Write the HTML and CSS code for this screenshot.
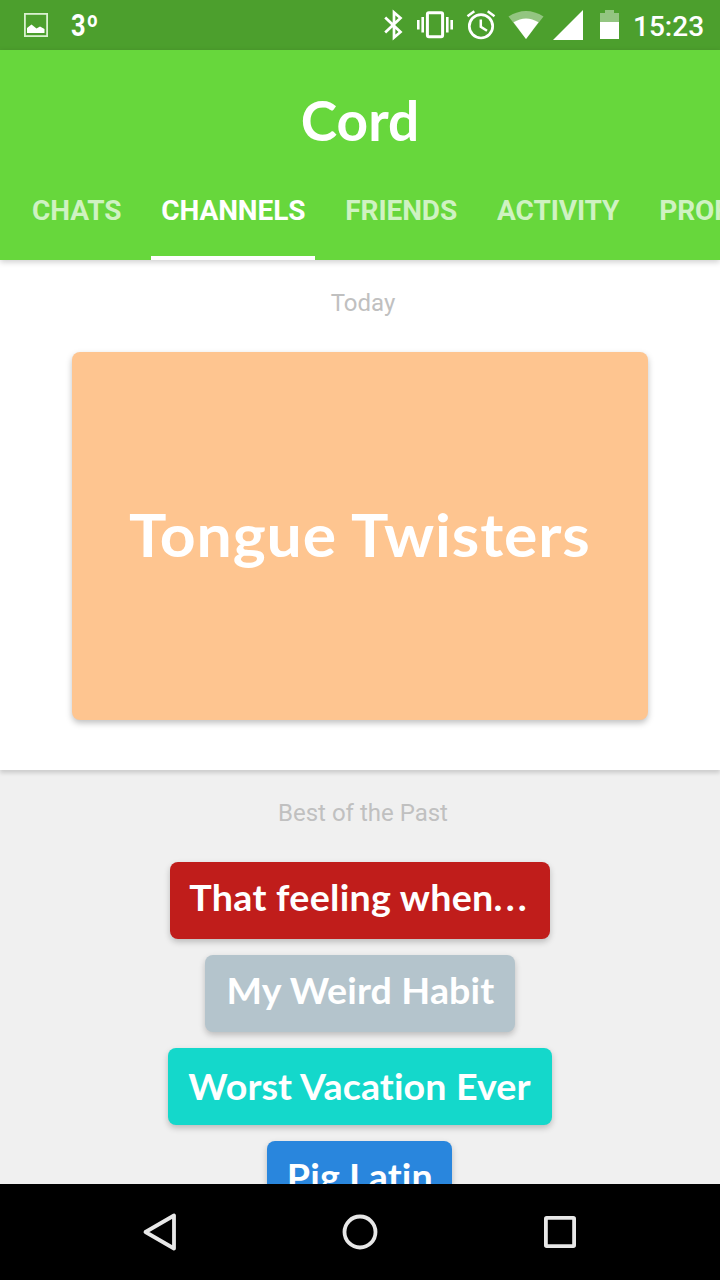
FILE: index.html
```html
<!DOCTYPE html>
<html lang="en">
<head>
    <meta charset="UTF-8">
    <meta name="viewport" content="width=device-width, initial-scale=1.0">
    <title>Cord</title>
    <link rel="stylesheet" href="styles.css">
</head>
<body>
    <div class="phone">

        <!-- Status bar -->
        <div class="status-bar">
            <svg class="icon-image" width="24" height="24" viewBox="0 0 24 24">
                <rect x="0.9" y="0.9" width="22.2" height="22.2" fill="none" stroke="#d9f0cf" stroke-width="1.8"/>
                <path d="M3 20v-5l4.500-3.500 5 4 3.500-2 4.500 2.500v4z" fill="#fff"/>
            </svg>
            <span class="temperature">3<sup>o</sup></span>
            <svg class="status-icons" width="250" height="50" viewBox="370 0 250 50">
                <!-- bluetooth -->
                <path d="M385.200 17.500l15.300 14.500-6.500 5.500V12.500l6.500 5.500-15.300 14.500" fill="none" stroke="#fff" stroke-width="2.700"/>
                <!-- vibrate -->
                <rect x="427.400" y="12.800" width="15.200" height="24" rx="1.500" fill="none" stroke="#fff" stroke-width="3"/>
                <path d="M422.700 17v15.500M418.300 20v9.500M447.300 17v15.500M451.700 20v9.500" stroke="#fff" stroke-width="2.600"/>
                <!-- alarm -->
                <circle cx="481" cy="26.300" r="11.700" fill="none" stroke="#fff" stroke-width="2.700"/>
                <path d="M480.800 19.500v7.300l6.200 4M467.500 16.200l6.800-5M494.500 16.200l-6.800-5" fill="none" stroke="#fff" stroke-width="2.500"/>
                <!-- wifi -->
                <path d="M508.500 16.500Q526 5.500 543.500 16.500L526 39z" fill="#fff" fill-opacity="0.400"/>
                <path d="M513.500 22.300Q526 14.500 538.500 22.300L526 39z" fill="#fff"/>
                <!-- signal -->
                <path d="M583 10v30h-30z" fill="#fff"/>
                <!-- battery -->
                <path d="M600 22V13h5v-3h9v3h5v9z" fill="#fff" fill-opacity="0.400"/>
                <path d="M600 22h19v17h-19z" fill="#fff"/>
            </svg>
            <span class="clock">15:23</span>
        </div>

        <!-- Header with tabs -->
        <header class="header">
            <h1 class="logo">Cord</h1>
            <nav class="tabs">
                <a class="tab">CHATS</a>
                <a class="tab active">CHANNELS</a>
                <a class="tab">FRIENDS</a>
                <a class="tab">ACTIVITY</a>
                <a class="tab">PROFILE</a>
            </nav>
        </header>

        <!-- Channels -->
        <section class="today">
            <h2 class="section-title">Today</h2>
            <div class="featured"><span>Tongue Twisters</span></div>
        </section>

        <section class="past">
            <h2 class="section-title">Best of the Past</h2>
            <div class="channel feeling"><span>That feeling when<i>...</i></span></div>
            <div class="channel habit"><span>My Weird Habit</span></div>
            <div class="channel vacation"><span>Worst Vacation Ever</span></div>
            <div class="channel latin"><span>Pig Latin</span></div>
        </section>

        <!-- Navigation bar -->
        <footer class="nav-bar">
            <svg width="40" height="40" viewBox="0 0 40 40">
                <path d="M34 3.500v33L5.500 20z"/>
            </svg>
            <svg width="40" height="40" viewBox="0 0 40 40">
                <circle cx="20" cy="20" r="15.500"/>
            </svg>
            <svg width="40" height="40" viewBox="0 0 40 40">
                <rect x="5.900" y="5.900" width="28.200" height="28.200" rx="0.800"/>
            </svg>
        </footer>
    </div>
</body>
</html>
```
FILE: styles.css
```css
* {
    box-sizing: border-box;
}

body {
    margin: 0;
    font-family: Roboto, sans-serif;
    background-color: #000;
}

.phone {
    display: flex;
    flex-direction: column;
    width: 720px;
    height: 1280px;
    overflow: hidden;
}

/* Status bar */
.status-bar {
    display: flex;
    align-items: center;
    flex: none;
    height: 50px;
    padding: 0 16px 0 24px;
    background-color: #4c9f2d;
    color: #fff;
}

.temperature {
    margin-left: 23px;
    padding-top: 2px;
    font-size: 31px;
    font-weight: 700;
    line-height: 50px;
    transform: scaleX(0.820);
    transform-origin: left;
}

.temperature sup {
    font-size: 22px;
    line-height: 0;
    vertical-align: 9px;
    margin-left: 2px;
}

.status-icons {
    margin-left: auto;
}

.clock {
    width: 71px;
    margin-left: 13px;
    padding-top: 3px;
    font-size: 28px;
    font-weight: 500;
    line-height: 50px;
}

/* Header */
.header {
    display: flex;
    flex-direction: column;
    flex: 0 0 210px;
    background-color: #67d73c;
    box-shadow: 0 2px 6px rgba(0, 0, 0, 0.200);
    color: #fff;
    z-index: 2;
}

.logo {
    margin: 0;
    height: 114px;
    padding-top: 37px;
    font-family: Lato, sans-serif;
    font-size: 55px;
    font-weight: 700;
    line-height: 66px;
    text-align: center;
}

.tabs {
    display: flex;
    height: 96px;
    padding-left: 22px;
    gap: 20px;
    white-space: nowrap;
}

.tab {
    flex: none;
    padding: 0 10px;
    border-bottom: 4px solid transparent;
    color: rgba(255, 255, 255, 0.700);
    font-size: 28px;
    font-weight: 700;
    line-height: 93px;
    letter-spacing: -0.100px;
}

.tab.active {
    color: #fff;
    border-bottom-color: #fff;
}

/* Sections */
.section-title {
    margin: 0;
    padding-left: 6px;
    color: #c0c0c0;
    font-size: 24px;
    font-weight: 400;
    line-height: 28px;
    text-align: center;
}

.today {
    flex: 0 0 510px;
    padding: 29px 72px 0;
    background-color: #fff;
    box-shadow: 0 3px 4px rgba(0, 0, 0, 0.150);
    z-index: 1;
}

.featured {
    height: 368px;
    margin-top: 35px;
    border-radius: 8px;
    background-color: #fec590;
    box-shadow: 0 3px 6px rgba(0, 0, 0, 0.250);
    color: #fff;
    font-family: Lato, sans-serif;
    font-size: 59px;
    font-weight: 700;
    line-height: 366px;
    letter-spacing: 0.800px;
    text-align: center;
    white-space: nowrap;
}

.featured span,
.channel span {
    display: inline-block;
    transform: scaleX(1.060);
}

.past {
    display: flex;
    flex-direction: column;
    align-items: center;
    flex: 0 0 414px;
    gap: 16px;
    padding-top: 29px;
    background-color: #f0f0f0;
    overflow: hidden;
}

.past .section-title {
    margin-bottom: 19px;
}

.channel {
    flex: none;
    height: 77px;
    border-radius: 8px;
    box-shadow: 0 3px 6px rgba(0, 0, 0, 0.220);
    color: #fff;
    font-family: Lato, sans-serif;
    font-size: 35.500px;
    font-weight: 700;
    font-variant-ligatures: none;
    line-height: 71px;
    letter-spacing: 0.100px;
    text-align: center;
    white-space: nowrap;
}

.feeling {
    width: 380px;
    background-color: #c01d1b;
    letter-spacing: 0.250px;
}

.feeling i {
    font-style: normal;
    letter-spacing: 3px;
}

.habit {
    width: 310px;
    background-color: #b4c4cc;
}

.vacation {
    width: 384px;
    background-color: #14d8cb;
    line-height: 77px;
}

.latin {
    width: 185px;
    margin-right: 1px;
    background-color: #2986dd;
}

/* Navigation bar */
.nav-bar {
    display: flex;
    align-items: center;
    justify-content: space-between;
    flex: 0 0 96px;
    padding: 0 140px;
    background-color: #000;
}

.nav-bar svg {
    fill: none;
    stroke: #e8e8e8;
    stroke-width: 3.800;
    stroke-linejoin: round;
}
```
